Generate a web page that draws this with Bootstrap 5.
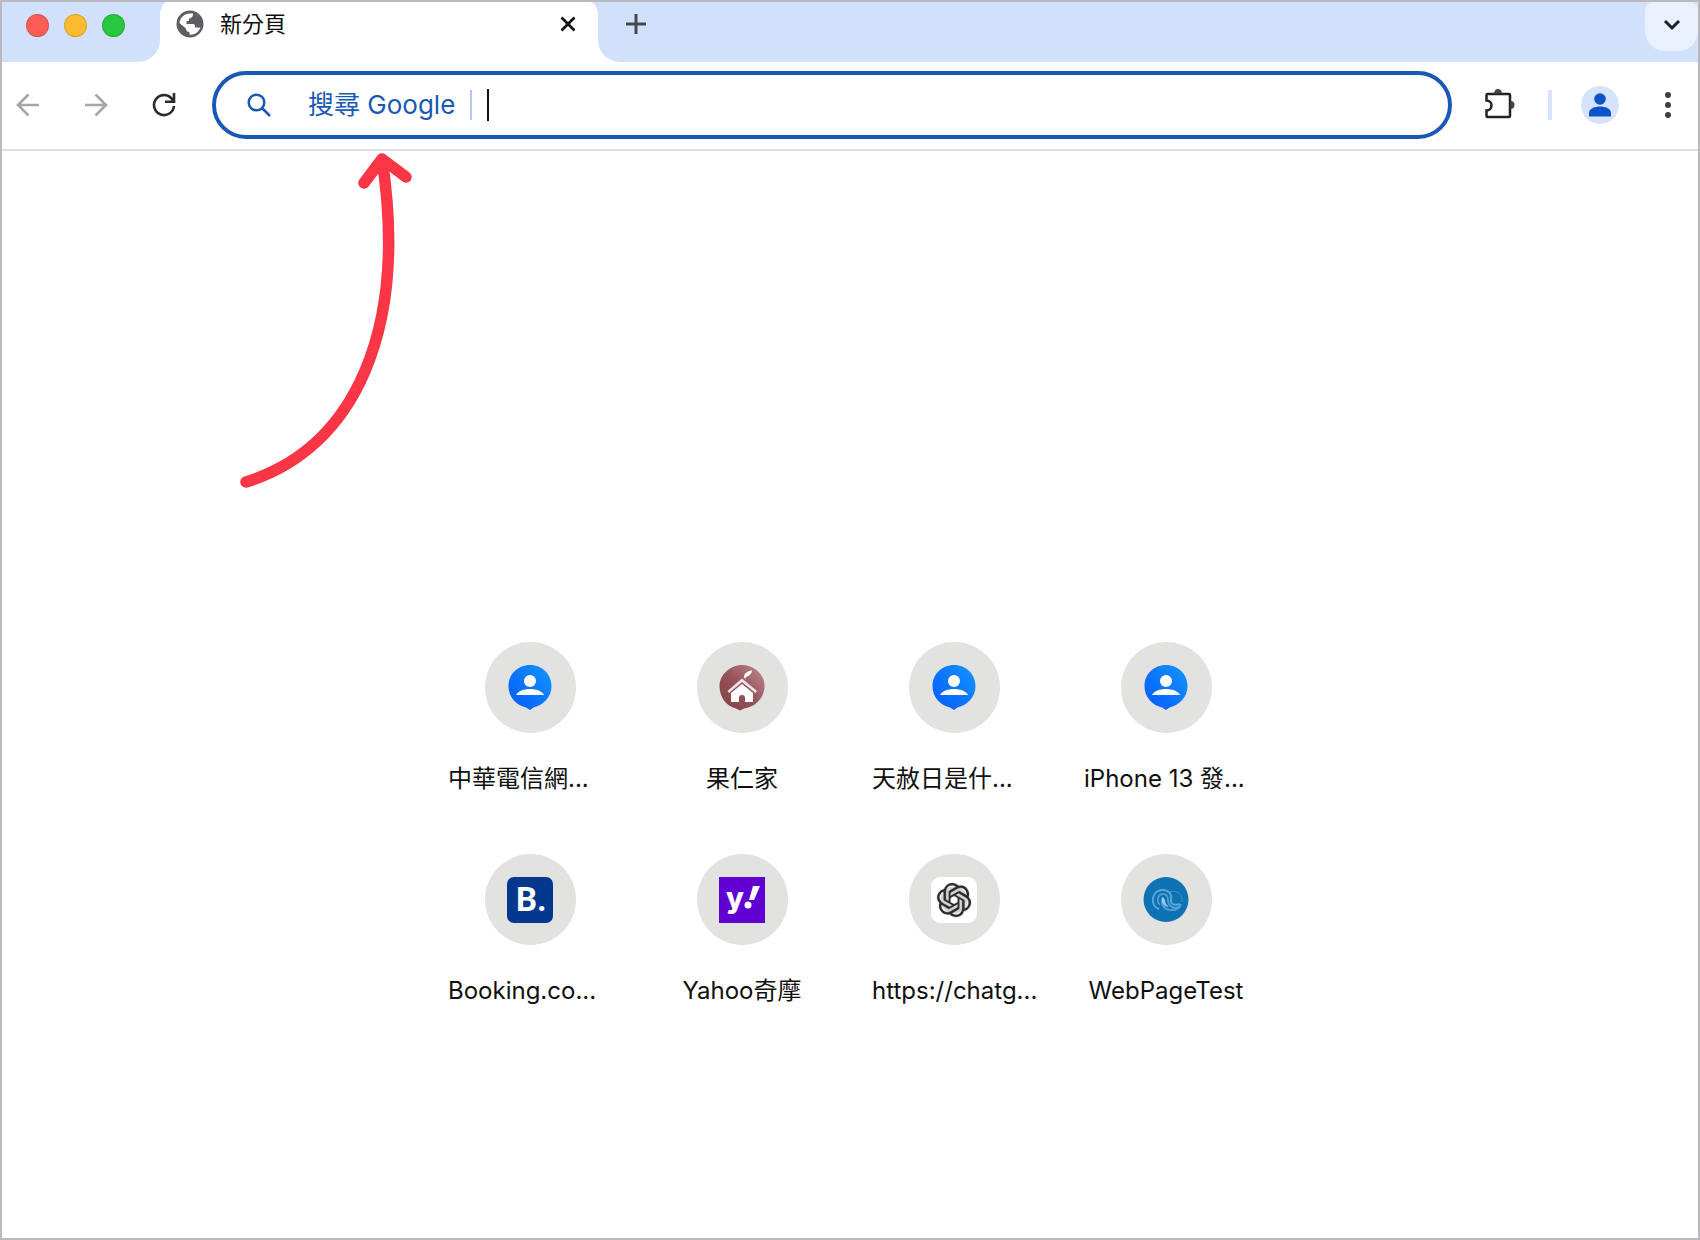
<!DOCTYPE html>
<html lang="zh-Hant">
<head>
<meta charset="utf-8">
<meta name="viewport" content="width=device-width, initial-scale=1">
<title>新分頁</title>
<link href="https://cdn.jsdelivr.net/npm/bootstrap@5.3.0/dist/css/bootstrap.min.css" rel="stylesheet">
<style>
  :root { --strip: #d2e1fb; --accent: #1a58b5; --ink: #2b2b2d; }
  body { font-family: Inter, "Noto Sans CJK TC", sans-serif; color: #0f0f10; background: #fff; }
  .window { border: 2px solid #bababc; }
  .tab-strip { height: 60px; background: #fff; }
  .strip-start { width: 158px; background: var(--strip); border-bottom-right-radius: 22px; padding: 0 0 14px 24px; gap: 15px; }
  .strip-end { background: var(--strip); border-bottom-left-radius: 22px; padding-left: 18px; }
  .light { width: 23px; height: 23px; border: 1px solid #0002; }
  .light-close { background: #fe5d57; }
  .light-min { background: #fdbc2f; }
  .light-max { background: #27c840; }
  .tab-slot { width: 438px; background: linear-gradient(var(--strip) 50%, #fff 50%); }
  .tab-face { background: #fff; border-radius: 8px 8px 0 0 / 14px 14px 0 0; padding: 0 10px 16px 16px; }
  .tab-title { font-size: 22px; line-height: 32px; margin-left: 16px; }
  .icon-btn { width: 40px; height: 40px; padding: 0; border: 0; background: none; color: var(--ink); display: flex; align-items: center; justify-content: center; flex: none; }
  .icon-btn:disabled { color: #a6a6a6; border: 0; opacity: 1; }
  .new-tab { color: #47494f; margin-top: 2px; }
  .tab-search { width: 53px; height: 49px; padding-bottom: 4px; background: #e9f1fe; border-radius: 8px 8px 20px 20px; }
  .toolbar { height: 86px; gap: 28px; padding: 0 10px 0 6px; }
  .toolbar-line { border-bottom: 2px solid #dedede; padding-bottom: 1px; }
  .omnibox { height: 68px; border: 4px solid var(--accent); border-radius: 34px; padding: 0 31px; color: var(--accent); }
  .omnibox label { font-size: 26px; line-height: 36px; margin-left: 37px; }
  .omnibox-rule { width: 2px; height: 30px; background: #b3c8f0; margin: 0 15px; }
  .omnibox input { height: 32px; border: 0; border-left: 2px solid #111; outline: 0; font-size: 26px; padding: 0 4px; background: none; }
  .bar-rule { width: 4px; height: 30px; background: #d6e4fb; flex: none; }
  .shortcuts { padding-top: 491px; }
  .shortcut-grid { display: grid; grid-template-columns: repeat(4, 164px); column-gap: 48px; row-gap: 57px; }
  .shortcut { color: inherit; text-decoration: none; gap: 28px; }
  .disc { width: 91px; height: 91px; background: #e2e2e0; }
  .shortcut-name { font-size: 24px; line-height: 36px; white-space: nowrap; }
  .pointer-arrow { position: absolute; left: 234px; top: 146px; pointer-events: none; }
</style>
</head>
<body>
<svg width="0" height="0" class="position-absolute" aria-hidden="true">
  <defs>
    <linearGradient id="blue" x1="1" y1="0" x2="0" y2="1"><stop offset="0" stop-color="#1596ff"/><stop offset="1" stop-color="#0458fb"/></linearGradient>
    <linearGradient id="wine" x1="1" y1="0" x2="0" y2="1"><stop offset="0" stop-color="#c08a8e"/><stop offset=".5" stop-color="#96545b"/><stop offset="1" stop-color="#823b43"/></linearGradient>
    <symbol id="person-pin" viewBox="0 0 46 46">
      <path d="M23 0c12 0 21.500 9 21.500 21 0 11-8 19-18 21.500L23 45l-4-2.500C9 40 1.500 32 1.500 21 1.500 9 11 0 23 0z" fill="url(#blue)"/>
      <circle cx="23" cy="16" r="6" fill="#fff"/><path d="M9 30c2-4 8-6 14-6s12 2 14 6z" fill="#fff"/>
    </symbol>
  </defs>
</svg>

<div class="window position-relative min-vh-100 d-flex flex-column">
  <header>
    <div class="tab-strip d-flex">
      <div class="strip-start d-flex align-items-center">
        <span class="light light-close rounded-circle"></span>
        <span class="light light-min rounded-circle"></span>
        <span class="light light-max rounded-circle"></span>
      </div>
      <div class="tab-slot">
        <div class="tab-face h-100 d-flex align-items-center">
          <svg width="28" height="28" viewBox="0 0 28 28" aria-hidden="true">
            <circle cx="14" cy="14" r="13.500" fill="#5d5f63"/>
            <path d="M14 3.500 17 3.500C17 7 16 8.500 13 8.500V11H10.500V14H17C19 14 19 16 19 17.500H22C23.500 17.500 24 18 24.500 17 23 22 19 25 13.500 24.700V22C11 22 10 20.500 10 18.500L3.500 13C4 7.500 8.500 3.500 14 3.500z" fill="#fff"/>
            <path d="M17 3.500V6.500L14 8.500V11H11V13.500H18C19.500 14 20 15.500 20 17L24.500 16.500 25 10 20 5z" fill="#5d5f63"/>
          </svg>
          <span class="tab-title flex-grow-1">新分頁</span>
          <button class="icon-btn" type="button" aria-label="關閉分頁"><svg width="16" height="16" viewBox="0 0 16 16" stroke="#111" stroke-width="2.800" fill="none"><path d="M1.500 1.500l13 13M14.500 1.500l-13 13"/></svg></button>
        </div>
      </div>
      <div class="strip-end d-flex flex-grow-1 justify-content-between">
        <button class="icon-btn new-tab" type="button" aria-label="新增分頁"><svg width="20" height="20" viewBox="0 0 20 20" stroke="currentColor" stroke-width="3"><path d="M10 0v20M0 10h20"/></svg></button>
        <button class="icon-btn tab-search" type="button" aria-label="搜尋分頁"><svg width="18" height="12" viewBox="0 0 18 12" fill="none" stroke="#1c1c28" stroke-width="3"><path d="M2 2l7 7 7-7"/></svg></button>
      </div>
    </div>

    <div class="toolbar-line">
    <nav class="toolbar d-flex align-items-center">
      <button class="icon-btn" type="button" disabled aria-label="上一頁"><svg width="24" height="24" viewBox="0 0 24 24" fill="none" stroke="currentColor" stroke-width="2.600"><path d="M23 12H2M12.500 1.500L2 12l10.500 10.500"/></svg></button>
      <button class="icon-btn" type="button" disabled aria-label="下一頁"><svg width="24" height="24" viewBox="0 0 24 24" fill="none" stroke="currentColor" stroke-width="2.600"><path d="M1 12h21M11.500 1.500L22 12 11.500 22.500"/></svg></button>
      <button class="icon-btn" type="button" aria-label="重新載入"><svg width="24" height="24" viewBox="0 0 24 24" fill="none" stroke="currentColor" stroke-width="2.600"><path d="M22 13a10 10 0 1 1-2.500-7.600L22 8.500M22 0v8.700h-9"/></svg></button>
      <div class="omnibox d-flex align-items-center flex-grow-1">
        <svg width="24" height="24" viewBox="0 0 24 24" fill="none" stroke="currentColor" stroke-width="2.500" aria-hidden="true"><circle cx="9.500" cy="9.500" r="7.800"/><path d="M15 15l8 8"/></svg>
        <label for="query">搜尋 Google</label>
        <span class="omnibox-rule"></span>
        <input id="query" class="flex-grow-1" type="text" autocomplete="off">
      </div>
      <button class="icon-btn" type="button" aria-label="擴充功能"><svg width="32" height="32" viewBox="0 0 32 32"><path d="M3.500 5H25a1 1 0 0 1 1 1V27a1 1 0 0 1-1 1H3.500a1 1 0 0 1-1-1V21.500A5 5 0 0 0 2.500 11.500V6a1 1 0 0 1 1-1z" fill="none" stroke="#222" stroke-width="2.500"/><path d="M10 4.500a4 4.500 0 0 1 8 0zM26.500 12a4 4 0 0 1 0 8z" fill="#444"/></svg></button>
      <span class="bar-rule"></span>
      <button class="icon-btn" type="button" aria-label="個人資料"><svg width="38" height="38" viewBox="0 0 38 38"><circle cx="19" cy="19" r="19" fill="#d5e3fb"/><circle cx="19" cy="13" r="5.800" fill="#0d52c9"/><path d="M8 30.500V27c0-4.500 6-6.500 11-6.500s11 2 11 6.500v3.500z" fill="#0d52c9"/></svg></button>
      <button class="icon-btn" type="button" aria-label="選單"><svg width="8" height="28" viewBox="0 0 8 28" fill="#3f3f42"><circle cx="4" cy="4" r="3"/><circle cx="4" cy="14" r="3"/><circle cx="4" cy="24" r="3"/></svg></button>
    </nav>
    </div>
  </header>

  <main class="shortcuts d-flex justify-content-center pe-1">
    <div class="shortcut-grid">
      <a class="shortcut d-flex flex-column align-items-center" href="#">
        <span class="disc rounded-circle d-flex align-items-center justify-content-center"><svg width="46" height="46"><use href="#person-pin"/></svg></span>
        <span class="shortcut-name w-100">中華電信網...</span>
      </a>
      <a class="shortcut d-flex flex-column align-items-center" href="#">
        <span class="disc rounded-circle d-flex align-items-center justify-content-center"><svg width="46" height="46" viewBox="0 0 46 46"><path d="M23 0C35 0 45.500 9 45.500 21S36 42 25 43.500L21 45.500l-4-2C7 41 .5 32 .5 21S11 0 23 0z" fill="url(#wine)"/><path d="M8.500 26L23 13.500 38 26l-1.500 2L23 17 10 28z" fill="#f1e4e5"/><path d="M23 19l11 9v9h-8v-4a3 3 0 0 0-6 0v4h-8v-9z" fill="#fff"/><path d="M25 12c0-3 3-6 8-6.500 0 3-3 5.500-6 6.500l-1 2z" fill="#fff"/></svg></span>
        <span class="shortcut-name">果仁家</span>
      </a>
      <a class="shortcut d-flex flex-column align-items-center" href="#">
        <span class="disc rounded-circle d-flex align-items-center justify-content-center"><svg width="46" height="46"><use href="#person-pin"/></svg></span>
        <span class="shortcut-name w-100">天赦日是什...</span>
      </a>
      <a class="shortcut d-flex flex-column align-items-center" href="#">
        <span class="disc rounded-circle d-flex align-items-center justify-content-center"><svg width="46" height="46"><use href="#person-pin"/></svg></span>
        <span class="shortcut-name w-100">iPhone 13 發...</span>
      </a>
      <a class="shortcut d-flex flex-column align-items-center" href="#">
        <span class="disc rounded-circle d-flex align-items-center justify-content-center"><svg width="46" height="46" viewBox="0 0 46 46"><rect width="46" height="46" rx="7" fill="#04388f"/><text x="9" y="34" font-family="Roboto, sans-serif" font-weight="700" font-size="33" fill="#fff">B.</text></svg></span>
        <span class="shortcut-name w-100">Booking.co...</span>
      </a>
      <a class="shortcut d-flex flex-column align-items-center" href="#">
        <span class="disc rounded-circle d-flex align-items-center justify-content-center"><svg width="46" height="46" viewBox="0 0 46 46"><rect width="46" height="46" fill="#6001d2"/><text x="7" y="31" font-family="Inter, sans-serif" font-weight="800" font-size="29" fill="#fff">y</text><path d="M34 9h7l-6 14h-5z" fill="#fff"/><circle cx="29" cy="28" r="3.500" fill="#fff"/></svg></span>
        <span class="shortcut-name">Yahoo奇摩</span>
      </a>
      <a class="shortcut d-flex flex-column align-items-center" href="#">
        <span class="disc rounded-circle d-flex align-items-center justify-content-center"><svg width="46" height="46" viewBox="0 0 46 46"><rect width="46" height="46" rx="9" fill="#fff"/><g transform="translate(6 6) scale(1.420)"><circle cx="12" cy="12" r="9.500" fill="#d4d4d4"/><circle cx="12" cy="12" r="2.500" fill="#fff"/><path fill="#2c2c2c" stroke="#2c2c2c" stroke-width=".2" d="M22.2819 9.8211a5.9847 5.9847 0 0 0-.5157-4.9108 6.0462 6.0462 0 0 0-6.5098-2.9A6.0651 6.0651 0 0 0 4.9807 4.1818a5.9847 5.9847 0 0 0-3.9977 2.9 6.0462 6.0462 0 0 0 .7427 7.0966 5.98 5.98 0 0 0 .511 4.9107 6.051 6.051 0 0 0 6.5146 2.9001A5.9847 5.9847 0 0 0 13.2599 24a6.0557 6.0557 0 0 0 5.7718-4.2058 5.9894 5.9894 0 0 0 3.9977-2.9001 6.0557 6.0557 0 0 0-.7475-7.0729zm-9.022 12.6081a4.4755 4.4755 0 0 1-2.8764-1.0408l.1419-.0804 4.7783-2.7582a.7948.7948 0 0 0 .3927-.6813v-6.7369l2.02 1.1686a.071.071 0 0 1 .038.052v5.5826a4.504 4.504 0 0 1-4.4945 4.4944zm-9.6607-4.1254a4.4708 4.4708 0 0 1-.5346-3.0137l.142.0852 4.783 2.7582a.7712.7712 0 0 0 .7806 0l5.8428-3.3685v2.3324a.0804.0804 0 0 1-.0332.0615L9.74 19.9502a4.4992 4.4992 0 0 1-6.1408-1.6464zM2.3408 7.8956a4.485 4.485 0 0 1 2.3655-1.9728V11.6a.7664.7664 0 0 0 .3879.6765l5.8144 3.3543-2.0201 1.1685a.0757.0757 0 0 1-.071 0l-4.8303-2.7865A4.504 4.504 0 0 1 2.3408 7.872zm16.5963 3.8558L13.1038 8.364 15.1192 7.2a.0757.0757 0 0 1 .071 0l4.8303 2.7913a4.4944 4.4944 0 0 1-.6765 8.1042v-5.6772a.79.79 0 0 0-.407-.667zm2.0107-3.0231l-.142-.0852-4.7735-2.7818a.7759.7759 0 0 0-.7854 0L9.409 9.2297V6.8974a.0662.0662 0 0 1 .0284-.0615l4.8303-2.7866a4.4992 4.4992 0 0 1 6.6802 4.66zM8.3065 12.863l-2.02-1.1638a.0804.0804 0 0 1-.038-.0567V6.0742a4.4992 4.4992 0 0 1 7.3757-3.4537l-.142.0805L8.704 5.459a.7948.7948 0 0 0-.3927.6813zm1.0976-2.3654l2.602-1.4998 2.6069 1.4998v2.9994l-2.5974 1.4997-2.6067-1.4997Z"/></g></svg></span>
        <span class="shortcut-name w-100">https://chatg...</span>
      </a>
      <a class="shortcut d-flex flex-column align-items-center" href="#">
        <span class="disc rounded-circle d-flex align-items-center justify-content-center"><svg width="46" height="46" viewBox="0 0 46 46"><circle cx="23" cy="22.500" r="22.500" fill="#0e72b5"/><g fill="none" stroke="#6bb4e0"><path d="M16 32C7 29 8 15 18 13c8-1 11 5 10 9-1 5 3 7 9 5" stroke-width="2" opacity=".8"/><path d="M17 28c-4-4-2-11 3-11 4 0 5 3 5 6 0 6 5 9 11 7" stroke-width="1.500" opacity=".8"/><path d="M20 21c-3 7 2 12 8 12 5 0 9-1 10-6" stroke-width="2" opacity=".7"/><path d="M27 15c7-3 13 3 12 10" stroke-width="1" opacity=".5"/></g><path d="M19 20c3 1 3 4 4 7l3 3c-5 0-8-4-7-10z" fill="#b5dcf5" opacity=".8"/></svg></span>
        <span class="shortcut-name">WebPageTest</span>
      </a>
    </div>
  </main>

  <svg class="pointer-arrow" width="184" height="346" viewBox="236 148 184 346" fill="none" stroke="#fa3545" stroke-width="11.500" stroke-linecap="round" stroke-linejoin="round" aria-hidden="true">
    <path d="M246 482C355 448 408 330 382 159M364 183l18-24 24 18"/>
  </svg>
</div>
<script src="https://cdn.jsdelivr.net/npm/bootstrap@5.3.0/dist/js/bootstrap.bundle.min.js"></script>
</body>
</html>
